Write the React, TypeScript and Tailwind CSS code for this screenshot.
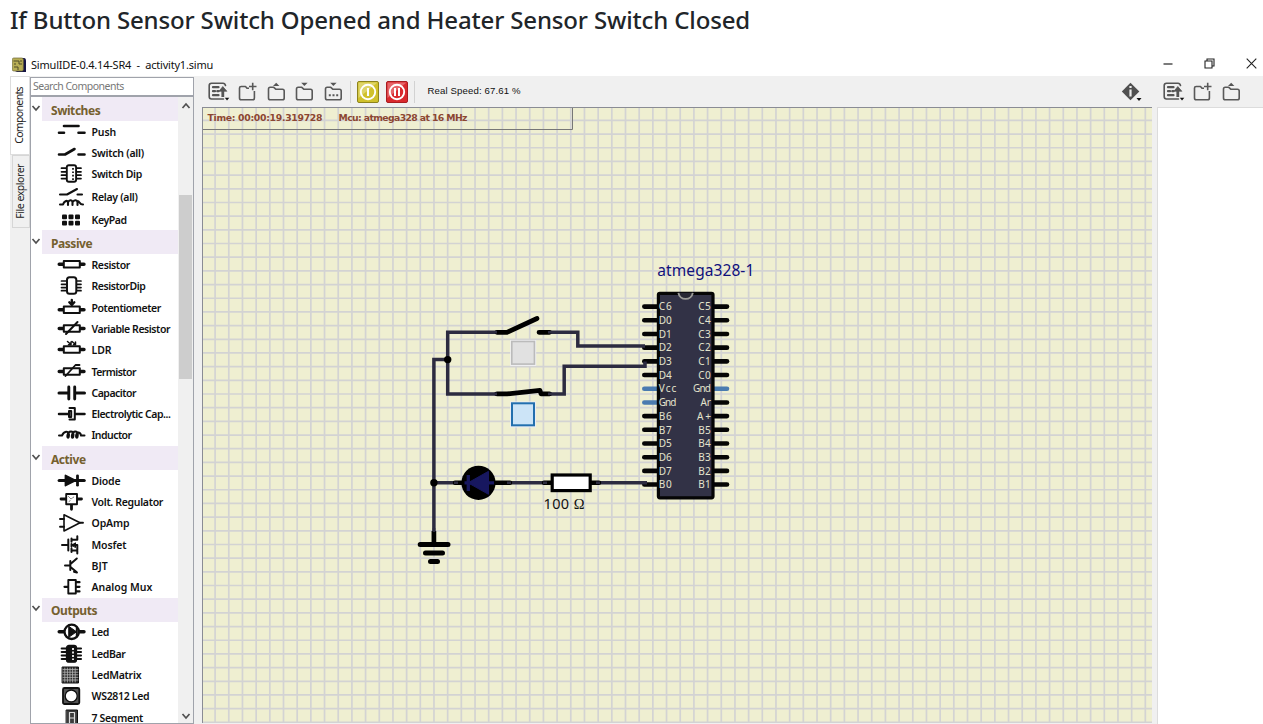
import type { ReactNode } from "react";

const K = "#101010";

const icons: Record<string, ReactNode> = {
  push: (<g strokeWidth="2.6"><path d="M7 4H21.5" /><path d="M2 10.8H7M21.5 10.8H27.5" /></g>),
  switch: (<g strokeWidth="2.6"><path d="M2 11.5H8L17.5 6M21.5 11.5H27.5" /></g>),
  switchdip: (<g><path strokeWidth="1.7" d="M4.5 4.2H24M4.5 7.8H24M4.5 11.2H24M4.5 14.6H24" /><rect x="9.8" y="1.2" width="9.3" height="16.5" rx="2" fill="white" strokeWidth="1.9" /><path strokeWidth="1.7" strokeLinecap="butt" strokeDasharray="1.7 1.7" d="M16 4V16" /></g>),
  relay: (<g strokeWidth="2.1"><path d="M3 7.5H10L20 2M20.5 7.5H25" /><path d="M3 17.5H6C7 14 10 13 11 15V18M11 15C13 12.5 15 13 15.5 15V18M15.5 15C18 12.5 20 13 20.5 15V18M20.5 14C23 14 22 17.5 26 17.5" /></g>),
  keypad: (<g fill={K} stroke="none"><rect x="5" y="4.5" width="5" height="4.8" rx="1" /><rect x="11.5" y="4.5" width="5" height="4.8" rx="1" /><rect x="18" y="4.5" width="5" height="4.8" rx="1" /><rect x="5" y="10.7" width="5" height="4.8" rx="1" /><rect x="11.5" y="10.7" width="5" height="4.8" rx="1" /><rect x="18" y="10.7" width="5" height="4.8" rx="1" /></g>),
  resistor: (<g><path strokeWidth="3.4" d="M2.2 9.2H6M23 9.2H27" /><rect x="6.8" y="6" width="16" height="6.5" strokeWidth="2" fill="white" /></g>),
  resdip: (<g><path strokeWidth="1.7" d="M4.5 5H24M4.5 8.3H24M4.5 11.6H24M4.5 14.7H24" /><rect x="10" y="1.3" width="9.3" height="16.5" rx="2.5" fill="white" strokeWidth="2" /></g>),
  pot: (<g><path strokeWidth="3.4" d="M2.2 11.8H6M23 11.8H27" /><rect x="6.8" y="8.5" width="16" height="6.6" strokeWidth="2" fill="white" /><path strokeWidth="2.4" d="M14.8 2V6M12.3 4.3L14.8 7L17.3 4.3" /></g>),
  varres: (<g><path strokeWidth="3.4" d="M2.2 9.5H6M23 9.5H27" /><rect x="6.8" y="6.2" width="16" height="6.6" strokeWidth="2" fill="white" /><path strokeWidth="2" d="M9 15L20.5 3" /></g>),
  ldr: (<g><path strokeWidth="3.4" d="M2.2 9.5H6M23 9.5H27" /><rect x="6.8" y="6.2" width="16" height="6.6" strokeWidth="2" fill="white" /><path strokeWidth="1.5" d="M10.5 1.5L14 4.5V2M15 1.5L18.5 4.5V2M11.5 4.8H14M16.5 4.8H18.5" /></g>),
  therm: (<g><path strokeWidth="3.4" d="M2.2 9.5H6M23 9.5H27" /><rect x="6.8" y="6.2" width="16" height="6.6" strokeWidth="2" fill="white" /><path strokeWidth="1.8" d="M8.5 14L18.5 3H22.5" /></g>),
  cap: (<g strokeWidth="3"><path d="M2 10H11M19 10H27.5" /><path strokeWidth="2.9" d="M11.8 4V16M17.7 4V16" /></g>),
  ecap: (<g><path strokeWidth="2.5" d="M2 10H11M18.5 10H27.5" /><path strokeWidth="2" d="M12 7V13H14.2V7ZM12.5 4H17.8V15.6H12.5" /></g>),
  ind: (<g strokeWidth="2"><path d="M2 10.5H5C7 6 11.5 5.5 12 9.5C12 14 9.8 13.5 10.5 10C11.5 5.5 16.3 5.5 16.5 9.5C16.5 14 14.2 13.5 15 10C16 5.5 20.5 5.5 20.8 9.5C20.8 14 18.5 13.5 19.2 10C20 6 23.5 7 24 10.5H27.5" /></g>),
  diode: (<g><path strokeWidth="3.2" d="M2.2 9.5H27.2" /><path d="M8.5 4.5L18.5 9.5L8.5 14.5Z" fill={K} strokeWidth="1.8" /><path strokeWidth="2.8" d="M20.5 4.8V14.2" /></g>),
  vreg: (<g><path strokeWidth="2.8" d="M4 7H9M20 7H24.5M14.5 13V17.3" /><rect x="9.2" y="2" width="10.8" height="10.3" strokeWidth="1.9" fill="white" /><path stroke="#777" strokeWidth="1" strokeDasharray="1.5 1.2" d="M11.5 4.5L14 7L17.5 4.5M12 9.5L14 8" /></g>),
  opamp: (<g strokeWidth="1.6"><path d="M7 1.8V18L23 9.8Z" /><path strokeWidth="1.9" d="M3 6H7M3 13.7H7M23 9.8H26" /></g>),
  mosfet: (<g strokeWidth="2"><path d="M5 10H11M11.3 4.5V15.5M14.5 3.5V6.8M14.5 9V11.5M14.5 13.5V17M14.5 4.8H20.3V1.2M14.5 15.5H20.3V18.5M14.5 10H20.3V15" /><path d="M15 10L18.5 7.8V12.2Z" fill={K} strokeWidth="1" /></g>),
  bjt: (<g><path strokeWidth="2" d="M8 9.5H13M13.3 5V14M13.5 8L19.8 2.5M13.5 11L19.8 16.3M20 16.6L17 15.8" /></g>),
  mux: (<g><path strokeWidth="2.2" d="M7.5 9.8H11M19 5.2H22.5M19 9.8H22.5M19 14.4H22.5" /><rect x="11.3" y="3" width="7.5" height="13.5" strokeWidth="1.9" fill="white" /></g>),
  led: (<g><path strokeWidth="3.4" d="M2.2 9.8H27" /><circle cx="14.7" cy="9.8" r="7.2" fill="white" strokeWidth="2.3" /><path d="M12 4.5L19.5 9.8L12 15.1Z" fill={K} strokeWidth="1" /><path strokeWidth="2" d="M19.8 5.5V14" /></g>),
  ledbar: (<g><path strokeWidth="2.1" d="M4.7 4.5H24M4.7 8H24M4.7 11.5H24M4.7 15H24" /><rect x="9.5" y="1.4" width="10" height="16.8" rx="2.5" fill={K} strokeWidth="1.3" /><path stroke="#ddd" strokeWidth="2" strokeLinecap="butt" strokeDasharray="2 1.5" d="M16 4V16" /></g>),
  matrix: (<g><rect x="5.5" y="2" width="16" height="16" fill="#2b2b2b" strokeWidth="1" /><path stroke="#b8b8b8" strokeWidth="0.8" d="M7.8 3V17M10.4 3V17M13 3V17M15.6 3V17M18.2 3V17M6 4.6H21M6 7.2H21M6 9.8H21M6 12.4H21M6 15H21" /></g>),
  ws: (<g><rect x="6" y="2" width="16.3" height="16" rx="1.5" fill="#555" strokeWidth="1.8" /><circle cx="14.2" cy="10" r="6" fill="white" strokeWidth="1.3" /></g>),
  seg: (<g><rect x="9.5" y="2" width="11" height="18" fill="#3c3c3c" strokeWidth="1" /><path stroke="#ddd" strokeWidth="1.2" d="M12.5 4.5H17.5V15.5H12.5V4.5M12.5 10H17.5" /></g>),
};

type Row = { icon: string; label: string; h?: string; t?: string };
const groups: { title: string; rows: Row[] }[] = [
  { title: "Switches", rows: [
    { icon: "push", label: "Push", h: "h-[21.5px]", t: "tracking-[-0.1px]" },
    { icon: "switch", label: "Switch (all)", t: "tracking-[-0.24px]" },
    { icon: "switchdip", label: "Switch Dip" },
    { icon: "relay", label: "Relay (all)", h: "h-[24px]", t: "tracking-[-0.3px]" },
    { icon: "keypad", label: "KeyPad", t: "tracking-[-0.4px]" },
  ] },
  { title: "Passive", rows: [
    { icon: "resistor", label: "Resistor", t: "tracking-[-0.38px]" },
    { icon: "resdip", label: "ResistorDip", t: "tracking-[-0.45px]" },
    { icon: "pot", label: "Potentiometer", t: "tracking-[-0.43px]" },
    { icon: "varres", label: "Variable Resistor", t: "tracking-[-0.45px]" },
    { icon: "ldr", label: "LDR", t: "tracking-[-0.1px]" },
    { icon: "therm", label: "Termistor", t: "tracking-[-0.55px]" },
    { icon: "cap", label: "Capacitor", t: "tracking-[-0.5px]" },
    { icon: "ecap", label: "Electrolytic Cap...", t: "tracking-[-0.45px]" },
    { icon: "ind", label: "Inductor", t: "tracking-[-0.55px]" },
  ] },
  { title: "Active", rows: [
    { icon: "diode", label: "Diode", t: "tracking-[-0.2px]" },
    { icon: "vreg", label: "Volt. Regulator" },
    { icon: "opamp", label: "OpAmp", t: "tracking-[-0.12px]" },
    { icon: "mosfet", label: "Mosfet", t: "tracking-[-0.15px]" },
    { icon: "bjt", label: "BJT", t: "tracking-normal" },
    { icon: "mux", label: "Analog Mux", t: "tracking-[-0.02px]" },
  ] },
  { title: "Outputs", rows: [
    { icon: "led", label: "Led" },
    { icon: "ledbar", label: "LedBar", t: "tracking-[-0.35px]" },
    { icon: "matrix", label: "LedMatrix", t: "tracking-[-0.25px]" },
    { icon: "ws", label: "WS2812 Led" },
    { icon: "seg", label: "7 Segment" },
  ] },
];

function Chevron({ up = false }: { up?: boolean }) {
  return (
    <svg width="10" height="8" viewBox="0 0 10 8" fill="none" stroke="#505050" strokeWidth="1.7">
      <path d={up ? "M1.5 6L5 2L8.5 6" : "M1.5 2L5 6L8.5 2"} />
    </svg>
  );
}

function Sidebar() {
  return (
    <div className="flex h-full w-[164px] flex-col border border-[#a0a3ab] bg-white">
      <div className="flex h-[19px] shrink-0 items-center border-b-2 border-[#a0a3ab] pt-px pl-[2px] text-[10.5px] tracking-[-0.5px] text-[#777]">
        Search Components
      </div>
      <div className="flex min-h-0 flex-1">
        <div className="w-[147px] overflow-hidden">
          {groups.map((g) => (
            <div key={g.title}>
              <div className="flex h-[24px] items-center">
                <div className="w-[11px] shrink-0 pb-[3px]"><Chevron /></div>
                <div className="flex h-full flex-1 items-center bg-[#f0eaf5] pt-[3px] pl-[9px] text-[12px] font-bold tracking-[-0.45px] text-[#75602f]">{g.title}</div>
              </div>
              {g.rows.map((r) => (
                <div key={r.label} className={`flex items-center pl-[26px] ${r.h ?? "h-[21.3px]"}`}>
                  <svg width="30" height="20" viewBox="0 0 30 20" fill="none" stroke={K} strokeLinecap="round" strokeLinejoin="round" className="shrink-0">{icons[r.icon]}</svg>
                  <span className={`pl-[4.5px] text-[10.5px] leading-[18px] font-semibold whitespace-nowrap text-[#111] ${r.t ?? "tracking-[-0.32px]"}`}>{r.label}</span>
                </div>
              ))}
            </div>
          ))}
        </div>
        <div className="flex w-[15px] flex-col items-center bg-[#f0f0f0]">
          <div className="flex h-[17px] items-center"><Chevron up /></div>
          <div className="mt-[81px] h-[184px] w-[13px] bg-[#cdcdcd]" />
          <div className="flex flex-1 items-end pb-[3px]"><Chevron /></div>
        </div>
      </div>
    </div>
  );
}

function ListIcon() {
  return (
    <svg width="22" height="20" viewBox="0 0 22 20" fill="none" stroke="#555" strokeWidth="1.6" strokeLinecap="round">
      <path d="M17.5 3.5C17.2 2 16.5 1.2 15 1.2H3.5Q1.2 1.2 1.2 3.5V14.5Q1.2 17 3.5 17H15.5" />
      <path strokeWidth="2.2" d="M5 5.2H10.5M5 9.2H7M9.3 9.2H10.5M5 13.2H10.5" />
      <path strokeWidth="2.8" strokeLinecap="butt" d="M14.8 15V7" />
      <path d="M11.2 9L14.8 4.6L18.6 9Z" fill="#555" strokeWidth="0.8" />
      <path d="M16.8 15.7H21.3L19 18.6Z" fill="#111" stroke="none" />
    </svg>
  );
}

function Folder({ kind }: { kind: "plus" | "up" | "down" | "dots" }) {
  return (
    <svg width="20" height="20" viewBox="0 0 20 20" fill="none" stroke="#595959" strokeWidth="1.6" strokeLinejoin="round">
      {kind === "plus" ? (
        <><path d="M11 6.2H9L7.5 4.5H3.2Q1.5 4.5 1.5 6V16Q1.5 17.8 3.2 17.8H14.7Q16.4 17.8 16.4 16V9" /><path d="M14.7 0.8V8.2M11 4.5H18.5" /></>
      ) : (
        <path d="M1.5 16V7Q1.5 5.3 3.2 5.3H6.8L9 7.3H15.5Q17.2 7.3 17.2 9V16Q17.2 17.8 15.5 17.8H3.2Q1.5 17.8 1.5 16Z" />
      )}
      {kind === "up" && <path d="M6 4H12.4L9.2 0.8Z" fill="#555" stroke="none" />}
      {(kind === "down" || kind === "dots") && <path d="M6.2 0.8H12.6L9.4 4Z" fill="#555" stroke="none" />}
      {kind === "dots" && <path strokeWidth="2" strokeDasharray="2 1.7" d="M4.8 13.2H14.5" />}
    </svg>
  );
}

const lineXs = Array.from({ length: 69 }, (_, i) => 12.1 + i * 13.68);
const lineYs = Array.from({ length: 45 }, (_, i) => 12.4 + i * 13.68);
const pinsL = ["C6", "D0", "D1", "D2", "D3", "D4", "Vcc", "Gnd", "B6", "B7", "D5", "D6", "D7", "B0"];
const pinsR = ["C5", "C4", "C3", "C2", "C1", "C0", "Gnd", "Ar", "A+", "B5", "B4", "B3", "B2", "B1"];

function Circuit() {
  return (
    <svg width="950" height="616" viewBox="0 0 950 616" className="block" fill="none">
      <rect width="950" height="616" fill="#efefd1" />
      <g stroke="#d3d3d3" strokeWidth="1.7">
        {lineXs.map((x) => <path key={x} d={`M${x} 0V616`} />)}
        {lineYs.map((y) => <path key={y} d={`M0 ${y}H950`} />)}
      </g>
      <g transform="translate(-203 -108)">
        <path d="M203 129.5H572.5V108" stroke="#777" strokeWidth="1" />
        <g fill="#8c4632" fontFamily="'DejaVu Sans', sans-serif" fontWeight="bold" fontSize="9.3">
          <text x="207.5" y="121" textLength="115">Time: 00:00:19.319728</text>
          <text x="338.5" y="121" textLength="129">Mcu: atmega328 at 16 MHz</text>
        </g>
        <g strokeLinecap="round" strokeWidth="4.6">
          {pinsL.map((p, i) => <path key={i} d={`M644.3 ${306.6 + i * 13.69}H658`} stroke={i === 6 || i === 7 ? "#4a7bb0" : "#050505"} />)}
          {pinsR.map((p, i) => <path key={i} d={`M713 ${306.6 + i * 13.69}H727`} stroke={i === 6 ? "#4a7bb0" : "#050505"} />)}
        </g>
        <g stroke="#2c2b40" strokeWidth="3.5" strokeLinejoin="miter">
          <path d="M497 332.3H447.7V393.9H497" />
          <path d="M447.7 359.6H433.9V532" />
          <path d="M549 332.3H577.8V346H645" />
          <path d="M549 393.9H564.2V366.3H645V361.5" />
          <path d="M433.9 482.8H457M508 482.8H546M597 482.8H647" />
        </g>
        <g stroke="#000" strokeWidth="4.7" strokeLinecap="round" strokeLinejoin="round">
          <path d="M497 332.3H507L537 318.5M539 332.3H549.5" />
          <path d="M497 393.9H507L540 390.4L541 393.9H549.5" />
          <path d="M433.9 531V544" strokeLinecap="butt" />
          <path d="M420.2 544.4H448M425.5 552.9H442.5M430.5 561.4H437.5" strokeWidth="5" />
        </g>
        <path d="M455 482.8H510M544 482.8H599" stroke="#000" strokeWidth="4.4" strokeLinecap="round" />
        <path d="M434 532V528M497 332.3H494M497 393.9H494M552 332.3H548M552 393.9H548M454 482.8H458M507 482.8H511M543 482.8H547M596 482.8H600" stroke="#2c2b40" strokeWidth="2.6" />
        <circle cx="447.7" cy="359.6" r="3.7" fill="#000" />
        <circle cx="433.9" cy="482.8" r="3.7" fill="#000" />
        <circle cx="478.5" cy="482.8" r="17.1" fill="#000" />
        <path d="M464.5 482.8H494M468.3 475V491" stroke="#17175f" strokeWidth="3.3" />
        <path d="M468 482.8L488.5 471.3V494.3Z" fill="#17175f" stroke="#17175f" strokeWidth="1" />
        <rect x="552.2" y="475" width="38" height="15.6" fill="white" stroke="#000" strokeWidth="3.2" />
        <text x="543.5" y="508.5" fill="#111" fontSize="14.5" fontFamily="'Noto Sans', sans-serif" textLength="41">100 <tspan fontFamily="'Liberation Serif', serif">Ω</tspan></text>
        <rect x="510.2" y="340" width="26" height="26" fill="#efeff2" />
        <rect x="511.8" y="341.5" width="22.6" height="22.6" fill="#e1e1e1" stroke="#bbb" strokeWidth="1.6" />
        <rect x="510" y="401.5" width="26" height="26" fill="#e9edf3" />
        <rect x="512" y="403.3" width="22" height="22" fill="#cce4f7" stroke="#226fae" strokeWidth="2" />
        <rect x="658.4" y="293.3" width="54.6" height="204.5" rx="1.5" fill="#323246" stroke="#050505" strokeWidth="3.2" />
        <path d="M678.4 292.8A7.3 7.3 0 0 0 692.8 292.8" stroke="#9c9c98" strokeWidth="1.9" fill="#282834" />
        <g fill="#e4e4cd" fontFamily="'Noto Sans', sans-serif" fontSize="10">
          {pinsL.map((p, i) => <text key={i} x="658.8" y={310.3 + i * 13.69} textLength={p.length === 3 ? 17.5 : 13}>{p}</text>)}
          {pinsR.map((p, i) => <text key={i} x={p.length === 3 ? 693 : p === "Ar" ? 700.5 : p === "A+" ? 697 : 698.3} y={310.3 + i * 13.69} textLength={p.length === 3 ? 18 : p === "Ar" ? 10.5 : p === "A+" ? 14 : 12.5}>{p}</text>)}
        </g>
        <text x="657.3" y="275.6" fill="#10107c" fontFamily="'Noto Sans', sans-serif" fontSize="15.5" textLength="97">atmega328-1</text>
      </g>
    </svg>
  );
}

export default function App() {
  return (
    <div className="flex h-[724px] w-[1263px] flex-col overflow-hidden bg-white font-['Noto_Sans','Open_Sans',sans-serif]">
      <h1 className="h-[54px] pl-[10px] text-[24px] leading-[40px] font-medium tracking-[-0.15px] whitespace-nowrap text-[#212529]">
        If Button Sensor Switch Opened and Heater Sensor Switch Closed
      </h1>
      <div className="flex h-[22px] items-center pl-[12px] text-[11px] tracking-[-0.2px] text-[#111]">
        <svg width="14" height="16" viewBox="0 0 14 16" className="shrink-0">
          <path d="M3 1H12Q14 1 14 4V15H5L1 13Z" fill="#161545" />
          <rect x="0.3" y="1" width="11" height="13" rx="1.5" fill="#b8ae55" stroke="#6e6838" strokeWidth="0.7" />
          <path d="M1.5 4H7V7H10M2 10H6V13M9 3V5M2 7H4" stroke="#4e4a28" fill="none" />
        </svg>
        <span className="pl-[5px] whitespace-pre">SimulIDE-0.4.14-SR4  -  activity1.simu</span>
        <div className="ml-auto flex items-center gap-[31px] pr-[6px] pb-[3px]">
          <svg width="10" height="11" viewBox="0 0 10 11"><path d="M0.5 6H9.5" stroke="#222" strokeWidth="1.2" /></svg>
          <svg width="11" height="11" viewBox="0 0 11 11" fill="none" stroke="#222" strokeWidth="1.1"><path d="M1 3H8V10H1ZM3 3V1H10V8H8" /></svg>
          <svg width="11" height="11" viewBox="0 0 11 11" stroke="#222" strokeWidth="1.1"><path d="M0.7 0.7L10.3 10.3M10.3 0.7L0.7 10.3" /></svg>
        </div>
      </div>
      <div className="ml-[10px] flex h-[648px] bg-[#f0f0f0]">
        <div className="flex w-[20px] shrink-0 flex-col text-[10.5px] text-[#222]">
          <div className="flex h-[79px] items-center justify-center border border-[#ddd] bg-white">
            <span className="rotate-180 tracking-[-0.65px] whitespace-nowrap [writing-mode:vertical-rl]">Components</span>
          </div>
          <div className="ml-[2px] flex h-[73px] items-center justify-center border border-[#d6d6d6]">
            <span className="rotate-180 tracking-[-0.45px] whitespace-nowrap [writing-mode:vertical-rl]">File explorer</span>
          </div>
        </div>
        <div className="h-full pt-[1px]"><Sidebar /></div>
        <div className="ml-[8px] flex w-[951px] shrink-0 flex-col">
          <div className="flex h-[31px] shrink-0 items-center pl-[6px]">
            <div className="mr-[8px] flex"><ListIcon /></div>
            <div className="flex gap-[8.5px]">
              <Folder kind="plus" /><Folder kind="up" /><Folder kind="down" /><Folder kind="dots" />
            </div>
            <div className="ml-[6px] h-[22px] w-px bg-[#d2d2d2]" />
            <svg width="22" height="22" viewBox="0 0 22 22" fill="none" className="ml-[6px]">
              <rect x="0.5" y="0.5" width="21" height="21" rx="1.5" fill="#cfc02b" stroke="#8d831c" />
              <path d="M1.5 1.5H20.5L1.5 17Z" fill="#ded46a" />
              <circle cx="11" cy="11" r="7.2" stroke="white" strokeWidth="1.9" /><path d="M11 7V15" stroke="white" strokeWidth="2.1" />
            </svg>
            <svg width="22" height="22" viewBox="0 0 22 22" fill="none" className="ml-[7px]">
              <rect x="0.5" y="0.5" width="21" height="21" rx="1.5" fill="#d9292d" stroke="#a81c20" />
              <path d="M1.5 1.5H20.5L1.5 17Z" fill="#e6666a" />
              <circle cx="11" cy="11" r="7.2" stroke="white" strokeWidth="1.9" /><path d="M9 7V15M13 7V15" stroke="white" strokeWidth="2" />
            </svg>
            <div className="ml-[6px] h-[22px] w-px bg-[#d2d2d2]" />
            <span className="ml-[13px] font-['Liberation_Sans',sans-serif] text-[9.6px] tracking-[0.13px] whitespace-nowrap text-[#111]">Real Speed: 67.61 %</span>
            <svg width="21" height="20" viewBox="0 0 21 20" className="mr-[11px] ml-auto">
              <path d="M9.5 0.8L18.3 9.5L9.5 18.2L0.8 9.5Z" fill="#505050" />
              <path d="M9.5 4V6M9.5 7.5V14.5" stroke="#eee" strokeWidth="2.2" />
              <path d="M15.5 16H20.5L18 19Z" fill="#111" />
            </svg>
          </div>
          <div className="h-[616px] w-[950px] overflow-hidden border-t border-l border-[#8a8c94]"><Circuit /></div>
        </div>
        <div className="flex flex-1 flex-col">
          <div className="flex h-[31px] shrink-0 items-center pl-[10px]">
            <div className="mr-[8px] flex"><ListIcon /></div>
            <div className="flex gap-[8.5px]"><Folder kind="plus" /><Folder kind="up" /></div>
          </div>
          <div className="ml-[4px] flex-1 border-t border-l border-[#dcdcdc] bg-white" />
        </div>
      </div>
    </div>
  );
}
